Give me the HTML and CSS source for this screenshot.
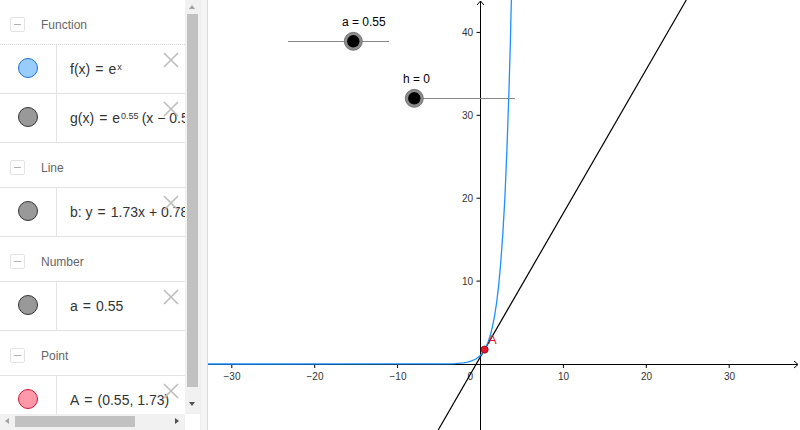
FILE: index.html
```html
<!DOCTYPE html>
<html>
<head>
<meta charset="utf-8">
<link rel="stylesheet" href="styles.css">
</head>
<body>
<div class="app">
  <div class="algebra">
    <div class="algebra-main">
      <div class="list">
        <div class="header"><span class="toggle"></span><span class="title">Function</span></div>
        <div class="item">
          <div class="marble-cell"><span class="marble blue"></span></div>
          <div class="expr">f(x)<span class="eq">=</span>e<sup>x</sup></div>
          <svg class="del" viewBox="0 0 16 16"><path d="M1 1L15 15M15 1L1 15"/></svg>
        </div>
        <div class="item">
          <div class="marble-cell"><span class="marble gray"></span></div>
          <div class="expr">g(x)<span class="eq">=</span>e<sup>0.55</sup> (x − 0.55) + e<sup>0.55</sup></div>
          <svg class="del" viewBox="0 0 16 16"><path d="M1 1L15 15M15 1L1 15"/></svg>
        </div>
        <div class="header"><span class="toggle"></span><span class="title">Line</span></div>
        <div class="item">
          <div class="marble-cell"><span class="marble gray"></span></div>
          <div class="expr">b: y<span class="eq">=</span>1.73x + 0.78</div>
          <svg class="del" viewBox="0 0 16 16"><path d="M1 1L15 15M15 1L1 15"/></svg>
        </div>
        <div class="header"><span class="toggle"></span><span class="title">Number</span></div>
        <div class="item">
          <div class="marble-cell"><span class="marble gray"></span></div>
          <div class="expr">a<span class="eq">=</span>0.55</div>
          <svg class="del" viewBox="0 0 16 16"><path d="M1 1L15 15M15 1L1 15"/></svg>
        </div>
        <div class="header"><span class="toggle"></span><span class="title">Point</span></div>
        <div class="item">
          <div class="marble-cell"><span class="marble red"></span></div>
          <div class="expr">A<span class="eq">=</span>(0.55, 1.73)</div>
          <svg class="del" viewBox="0 0 16 16"><path d="M1 1L15 15M15 1L1 15"/></svg>
        </div>
      </div>
      <div class="vscroll">
        <span class="arrow up"></span>
        <div class="vthumb"></div>
        <span class="arrow down"></span>
      </div>
    </div>
    <div class="algebra-bottom">
      <div class="hscroll">
        <span class="arrow left"></span>
        <div class="hthumb"></div>
        <span class="arrow right"></span>
      </div>
      <div class="corner"></div>
    </div>
  </div>
  <div class="splitter"></div>
  <div class="graphics">
    <svg class="canvas" width="592" height="430" viewBox="0 0 592 430">
      <!-- axes -->
      <g class="axis">
        <line x1="0" y1="364.5" x2="590" y2="364.5"/>
        <path d="M586 361L590 364.5L586 368" fill="none"/>
        <line x1="272.5" y1="430" x2="272.5" y2="1"/>
        <path d="M269 5L272.5 1L276 5" fill="none"/>
        <!-- x ticks -->
        <path d="M23.8 364.5V368M106.7 364.5V368M189.6 364.5V368M355.4 364.5V368M438.3 364.5V368M521.2 364.5V368"/>
        <!-- y ticks -->
        <path d="M268.5 32.4H272.5M268.5 115.3H272.5M268.5 198.2H272.5M268.5 281.1H272.5"/>
      </g>
      <g class="ticklabels">
        <text x="24" y="380" text-anchor="middle">−30</text>
        <text x="107" y="380" text-anchor="middle">−20</text>
        <text x="190" y="380" text-anchor="middle">−10</text>
        <text x="265" y="380" text-anchor="end">0</text>
        <text x="355.5" y="380" text-anchor="middle">10</text>
        <text x="438.5" y="380" text-anchor="middle">20</text>
        <text x="521.5" y="380" text-anchor="middle">30</text>
        <text x="265" y="36" text-anchor="end">40</text>
        <text x="265" y="119" text-anchor="end">30</text>
        <text x="265" y="202" text-anchor="end">20</text>
        <text x="265" y="285" text-anchor="end">10</text>
      </g>
      <!-- tangent line b -->
      <line class="line-b" x1="478.3" y1="0" x2="230.2" y2="430"/>
      <!-- f(x) = e^x -->
      <path class="curve-f" d="M-2 364 L200 363.95 L230 363.9 L238.8 363.85 L247.1 363.59 L255.4 362.88 L259.6 362.15 L263.7 360.95 L267.9 358.97 L272 355.71 L274.1 353.36 L276.1 350.33 L278.2 346.45 L280.3 341.47 L282.4 335.07 L284.4 326.85 L286.5 316.29 L288.6 302.75 L290.7 285.35 L292.7 263.01 L294.8 234.34 L296.9 197.49 L298.9 150.2 L301 89.47 L302.3 45.1 L303.5 -6.5"/>
      <!-- point A -->
      <circle class="pt-a" cx="276.6" cy="349.6" r="3.6"/>
      <text class="lbl-a" x="280" y="344">A</text>
      <!-- slider a -->
      <line class="slider-line" x1="80" y1="41.5" x2="181" y2="41.5"/>
      <circle class="knob-ring" cx="145.3" cy="41.3" r="9"/>
      <circle class="knob" cx="145.3" cy="41.3" r="6.2"/>
      <text class="slider-label" x="134" y="26">a = 0.55</text>
      <!-- slider h -->
      <line class="slider-line" x1="206" y1="98.5" x2="307" y2="98.5"/>
      <circle class="knob-ring" cx="206.3" cy="98.3" r="9"/>
      <circle class="knob" cx="206.3" cy="98.3" r="6.2"/>
      <text class="slider-label" x="195" y="83">h = 0</text>
    </svg>
  </div>
</div>
</body>
</html>
```

FILE: styles.css
```css
html, body {
  margin: 0;
  padding: 0;
  background: #fff;
}
body {
  width: 800px;
  height: 430px;
  overflow: hidden;
  font-family: "Liberation Sans", Arial, sans-serif;
}
.app {
  display: flex;
  width: 800px;
  height: 430px;
}
.algebra {
  width: 200px;
  height: 430px;
  display: flex;
  flex-direction: column;
}
.algebra-main {
  display: flex;
  height: 414px;
}
.list {
  width: 185px;
  height: 414px;
  overflow: hidden;
}
.header {
  height: 39px;
  padding-top: 5px;
  display: flex;
  align-items: center;
  border-bottom: 1px solid #e3e3e3;
}
.header:first-child {
  border-bottom: 1px dotted #d6d6d6;
}
.toggle {
  width: 13px;
  height: 13px;
  margin-left: 10px;
  border: 1px solid #e3e3e3;
  border-radius: 2px;
  display: flex;
  align-items: center;
  justify-content: center;
}
.toggle::after {
  content: "";
  width: 7px;
  height: 1px;
  background: #b0b0b0;
}
.title {
  margin-left: 16px;
  font-size: 12px;
  color: #666;
}
.item {
  position: relative;
  height: 48px;
  display: flex;
  border-bottom: 1px solid #e3e3e3;
}
.marble-cell {
  width: 56px;
  display: flex;
  align-items: center;
  justify-content: center;
  padding-bottom: 3px;
  border-right: 1px solid #e3e3e3;
}
.marble {
  width: 18px;
  height: 18px;
  border-radius: 50%;
  border: 1px solid #333;
  background: #999;
}
.marble.blue {
  background: #99ccff;
  border-color: #1e6fd0;
}
.marble.red {
  background: #ff99aa;
  border-color: #d01530;
}
.expr {
  flex: 1;
  padding-left: 13px;
  display: flex;
  align-items: center;
  font-size: 14px;
  color: #333;
  white-space: nowrap;
  overflow: hidden;
}
.expr sup {
  font-size: 9px;
  position: relative;
  top: -2px;
  margin-left: 1px;
  margin-right: 3px;
}
.eq {
  margin: 0 5px;
}
.del {
  position: absolute;
  left: 163px;
  top: 7px;
  width: 16px;
  height: 16px;
  fill: none;
  stroke: #bdbdbd;
  stroke-width: 1.6;
}
.vscroll {
  position: relative;
  width: 15px;
  height: 414px;
  background: #f1f1f1;
}
.vthumb {
  position: absolute;
  left: 2px;
  top: 14px;
  width: 11px;
  height: 373px;
  background: #c1c1c1;
}
.arrow {
  position: absolute;
  width: 0;
  height: 0;
}
.arrow.up {
  left: 4px;
  top: 5px;
  border-left: 3.5px solid transparent;
  border-right: 3.5px solid transparent;
  border-bottom: 4px solid #a3a3a3;
}
.arrow.down {
  left: 4px;
  top: 402px;
  border-left: 3.5px solid transparent;
  border-right: 3.5px solid transparent;
  border-top: 4px solid #505050;
}
.algebra-bottom {
  display: flex;
  height: 16px;
}
.hscroll {
  position: relative;
  width: 185px;
  height: 16px;
  background: #f1f1f1;
}
.hthumb {
  position: absolute;
  left: 15px;
  top: 2px;
  width: 120px;
  height: 11px;
  background: #c1c1c1;
}
.arrow.left {
  left: 5px;
  top: 4px;
  border-top: 3.5px solid transparent;
  border-bottom: 3.5px solid transparent;
  border-right: 4px solid #a3a3a3;
}
.arrow.right {
  left: 175px;
  top: 4px;
  border-top: 3.5px solid transparent;
  border-bottom: 3.5px solid transparent;
  border-left: 4px solid #505050;
}
.corner {
  width: 15px;
  background: #fff;
}
.splitter {
  width: 6px;
  height: 430px;
  background: #f5f5f5;
  border-left: 1px solid #ececec;
  border-right: 1px solid #dcdcdc;
}
.graphics {
  width: 592px;
  height: 430px;
  overflow: hidden;
}
.canvas {
  display: block;
}
.axis line, .axis path {
  stroke: #000;
  stroke-width: 1;
}
.ticklabels text {
  font-family: "Liberation Sans", Arial, sans-serif;
  font-size: 10px;
  fill: #333;
}
.line-b {
  stroke: #000;
  stroke-width: 1.2;
}
.curve-f {
  fill: none;
  stroke: #1e90ff;
  stroke-width: 1.3;
}
.pt-a {
  fill: #e3162b;
  stroke: #7a0a14;
  stroke-width: 0.8;
}
.lbl-a {
  font-family: "Liberation Sans", Arial, sans-serif;
  font-size: 13px;
  fill: #e3162b;
}
.slider-line {
  stroke: #888;
  stroke-width: 1;
}
.knob-ring {
  fill: #8c8c8c;
  stroke: #666;
  stroke-width: 0.8;
}
.knob {
  fill: #000;
}
.slider-label {
  font-family: "Liberation Sans", Arial, sans-serif;
  font-size: 12px;
  fill: #000;
}
```
